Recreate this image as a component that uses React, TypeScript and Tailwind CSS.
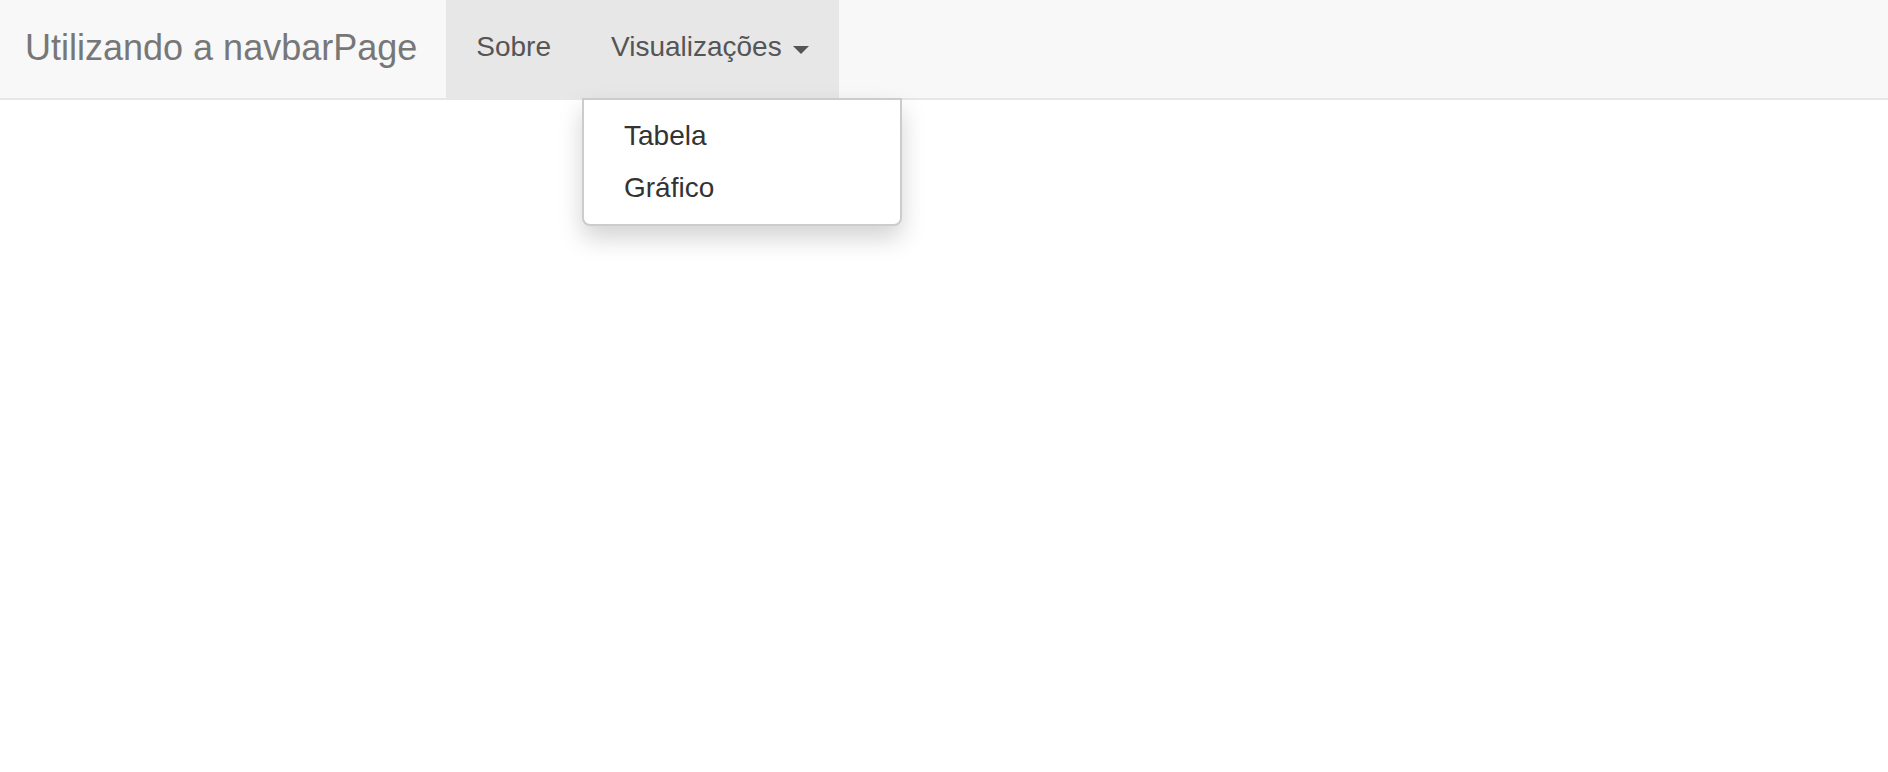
import React from "react";

export default function App() {
  return (
    <div className="min-h-[772px] w-full bg-white font-['Liberation_Sans',Arial,sans-serif]">
      <nav className="flex h-[100px] w-full border-b-2 border-[#e7e7e7] bg-[#f8f8f8]">
        <div className="h-[98px] pl-[25px] pr-[29px] pt-[28px] text-[36px] leading-[40px] text-[#777] whitespace-nowrap">
          Utilizando a navbarPage
        </div>
        <ul className="flex h-[98px]">
          <li className="h-[98px] bg-[#e7e7e7] px-[30px] pt-[27px] text-[28px] leading-[40px] text-[#555] whitespace-nowrap">
            Sobre
          </li>
          <li className="relative h-[98px] bg-[#e7e7e7] px-[30px] pt-[27px] text-[28px] leading-[40px] text-[#555] whitespace-nowrap">
            Visualizações{" "}
            <span className="relative top-[1px] ml-[4px] inline-block h-0 w-0 border-x-[8px] border-t-[8px] border-x-transparent border-t-[#555] align-middle" />
            <div className="absolute left-[1px] top-[98px] z-10 w-[320px] rounded-b-[8px] border-2 border-[#cccccc] bg-white py-[10px] shadow-[0_12px_24px_rgba(0,0,0,0.175)]">
              <div className="px-[40px] py-[6px] text-[28px] leading-[40px] text-[#333]">Tabela</div>
              <div className="px-[40px] py-[6px] text-[28px] leading-[40px] text-[#333]">Gráfico</div>
            </div>
          </li>
        </ul>
      </nav>
    </div>
  );
}
